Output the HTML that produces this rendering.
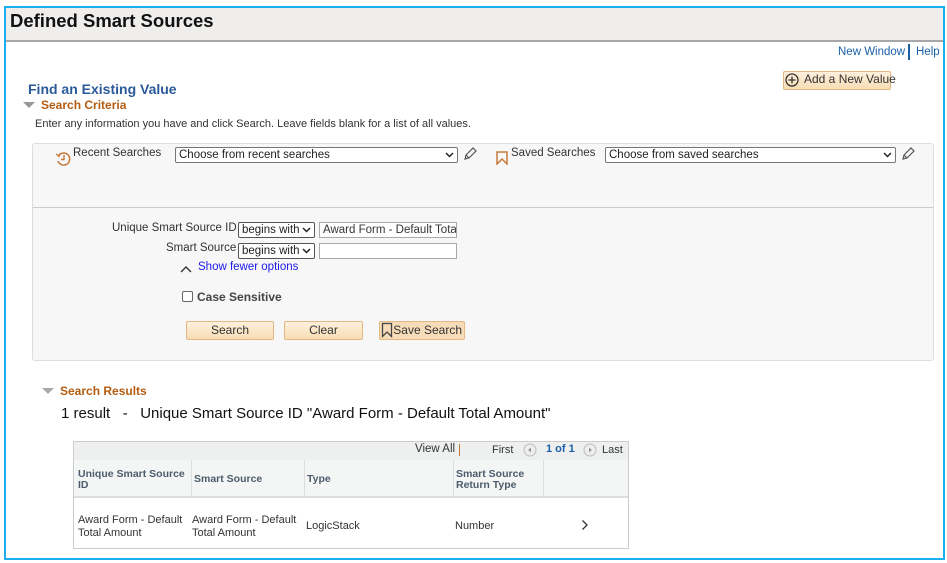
<!DOCTYPE html>
<html><head><meta charset="utf-8"><style>
*{margin:0;padding:0;box-sizing:border-box}
body{width:947px;height:563px;background:#fff;font-family:"Liberation Sans",Arial,sans-serif;position:relative;overflow:hidden;color:#333}
.a{position:absolute;white-space:nowrap}
.frame{position:absolute;left:4px;top:6px;width:941px;height:554px;border:2px solid #1ab0f0}
.hdr{position:absolute;left:6px;top:8px;width:937px;height:34px;background:#efeeed;border-bottom:2px solid #a8a8a8}
.sel{position:absolute;height:16px;border:1px solid #767676;background:#fff;font-size:11.5px;color:#222;padding:1px 3px;border-radius:2px;white-space:nowrap;overflow:hidden}
.sel svg{position:absolute;right:3px;top:4px}
.inp{position:absolute;height:16px;border:1px solid #a9a9a9;background:#fff;font-size:11.5px;color:#333;padding:1px 3px;overflow:hidden;white-space:nowrap}
.btn{position:absolute;height:19px;background:linear-gradient(#fdf0dc,#f8ddb5);border:1px solid #e3b883;font-size:12px;color:#333;text-align:center;line-height:17px;border-radius:2px;white-space:nowrap}
.th{position:absolute;font-size:10.5px;font-weight:bold;color:#4c5c6c;line-height:11px}
.td{position:absolute;font-size:11px;color:#333;line-height:13px}
</style></head><body>
<div class="hdr"></div>
<div class="frame"></div>
<div class="a" style="left:10px;top:10px;font-size:18.5px;font-weight:bold;color:#111">Defined Smart Sources</div>
<div class="a" style="left:838px;top:46px;font-size:11.5px;color:#1a5fa8">New Window</div>
<div class="a" style="left:908px;top:44px;width:2px;height:16px;background:#1a5fa8"></div>
<div class="a" style="left:916px;top:46px;font-size:11.5px;color:#1a5fa8">Help</div>
<div class="btn" style="left:783px;top:71px;width:108px;height:19px;text-align:left;padding-left:20px;line-height:15px">Add a New Value</div>
<svg class="a" style="left:785px;top:73px" width="14" height="14"><circle cx="7" cy="7" r="6" fill="none" stroke="#333" stroke-width="1.3"/><path d="M7 3.5v7M3.5 7h7" stroke="#333" stroke-width="1.3"/></svg>
<div class="a" style="left:28px;top:81px;font-size:14px;font-weight:bold;color:#2a5a9a">Find an Existing Value</div>
<svg class="a" style="left:23px;top:102px" width="12" height="8"><path d="M0 0h12L6 6z" fill="#999"/></svg>
<div class="a" style="left:41px;top:98px;font-size:12px;font-weight:bold;color:#b35c12">Search Criteria</div>
<div class="a" style="left:35px;top:118px;font-size:11px;color:#333">Enter any information you have and click Search. Leave fields blank for a list of all values.</div>
<div class="a" style="left:32px;top:143px;width:902px;height:218px;background:#f7f7f7;border:1px solid #ddd;border-radius:3px"></div>
<div class="a" style="left:33px;top:207px;width:900px;height:1px;background:#ccc"></div>
<svg class="a" style="left:55px;top:150px" width="18" height="18"><path d="M3.5 6A6 6 0 1 1 3 11" fill="none" stroke="#c67a3a" stroke-width="1.5"/><path d="M1 4l3 2.5 1.5-3.5" fill="none" stroke="#c67a3a" stroke-width="1.3"/><path d="M9 5v4.5h-3" fill="none" stroke="#c67a3a" stroke-width="1.4"/></svg>
<div class="a" style="left:73px;top:147px;font-size:11.5px;color:#333">Recent Searches</div>
<div class="sel" style="left:175px;top:147px;width:283px">Choose from recent searches<svg width="9" height="6"><path d="M1 1l3.5 3.5L8 1" fill="none" stroke="#222" stroke-width="1.5"/></svg></div>
<svg class="a" style="left:462px;top:146px" width="16" height="16"><path d="M3 13l1-4 7-7 3 3-7 7z M4 9l3 3" fill="none" stroke="#555" stroke-width="1.2"/></svg>
<svg class="a" style="left:496px;top:151px" width="12" height="14"><path d="M1 1h10v12L6 8 1 13z" fill="none" stroke="#c67a3a" stroke-width="1.5"/></svg>
<div class="a" style="left:511px;top:147px;font-size:11.5px;color:#333">Saved Searches</div>
<div class="sel" style="left:605px;top:147px;width:291px">Choose from saved searches<svg width="9" height="6"><path d="M1 1l3.5 3.5L8 1" fill="none" stroke="#222" stroke-width="1.5"/></svg></div>
<svg class="a" style="left:900px;top:146px" width="16" height="16"><path d="M3 13l1-4 7-7 3 3-7 7z M4 9l3 3" fill="none" stroke="#555" stroke-width="1.2"/></svg>
<div class="a" style="left:112px;top:222px;font-size:11.5px;color:#333">Unique Smart Source ID</div>
<div class="sel" style="left:238px;top:222px;width:77px;border-color:#555">begins with<svg width="9" height="6"><path d="M1 1l3.5 3.5L8 1" fill="none" stroke="#222" stroke-width="1.5"/></svg></div>
<div class="inp" style="left:319px;top:222px;width:138px">Award Form - Default Tota</div>
<div class="a" style="left:166px;top:242px;font-size:11.5px;color:#333">Smart Source</div>
<div class="sel" style="left:238px;top:243px;width:77px;border-color:#555">begins with<svg width="9" height="6"><path d="M1 1l3.5 3.5L8 1" fill="none" stroke="#222" stroke-width="1.5"/></svg></div>
<div class="inp" style="left:319px;top:243px;width:138px"></div>
<svg class="a" style="left:180px;top:265px" width="12" height="8"><path d="M1 7l5-5 5 5" fill="none" stroke="#333" stroke-width="1.4"/></svg>
<div class="a" style="left:198px;top:261px;font-size:11.5px;color:#1a1aee">Show fewer options</div>
<div class="a" style="left:182px;top:291px;width:11px;height:11px;border:1px solid #666;border-radius:2px;background:#fff"></div>
<div class="a" style="left:197px;top:290px;font-size:12px;font-weight:bold;color:#444">Case Sensitive</div>
<div class="btn" style="left:186px;top:321px;width:88px">Search</div>
<div class="btn" style="left:284px;top:321px;width:79px">Clear</div>
<div class="btn" style="left:379px;top:321px;width:86px;background:#f6dcb8;text-align:right;padding-right:2px">Save Search</div>
<svg class="a" style="left:381px;top:322px" width="12" height="16"><path d="M1.5 1.5h9v13L6 10l-4.5 4.5z" fill="none" stroke="#444" stroke-width="1.3"/></svg>
<svg class="a" style="left:42px;top:388px" width="12" height="8"><path d="M0 0h12L6 6z" fill="#aaa"/></svg>
<div class="a" style="left:60px;top:384px;font-size:12px;font-weight:bold;color:#b35c12">Search Results</div>
<div class="a" style="left:61px;top:405px;font-size:15px;color:#111">1 result&nbsp;&nbsp;&nbsp;-&nbsp;&nbsp;&nbsp;Unique Smart Source ID "Award Form - Default Total Amount"</div>
<div class="a" style="left:73px;top:441px;width:556px;height:108px;border:1px solid #ccc;background:#fff"></div>
<div class="a" style="left:74px;top:442px;width:554px;height:18px;background:#eef0f0"></div>
<div class="a" style="left:415px;top:443px;font-size:11.5px;color:#333">View All</div>
<div class="a" style="left:459px;top:444px;width:1px;height:12px;background:#c67a3a"></div>
<div class="a" style="left:492px;top:444px;font-size:11px;color:#333">First</div>
<svg class="a" style="left:523px;top:443px" width="14" height="14"><circle cx="7" cy="7" r="6" fill="#eee" stroke="#bbb"/><path d="M8 4.5v5L5 7z" fill="#999"/></svg>
<div class="a" style="left:546px;top:443px;font-size:11px;font-weight:bold;color:#1a5fa8">1 of 1</div>
<svg class="a" style="left:583px;top:443px" width="14" height="14"><circle cx="7" cy="7" r="6" fill="#eee" stroke="#bbb"/><path d="M6 4.5v5L9 7z" fill="#999"/></svg>
<div class="a" style="left:602px;top:444px;font-size:11px;color:#333">Last</div>
<div class="a" style="left:74px;top:460px;width:554px;height:38px;background:#f4f5f5;border-bottom:2px solid #ddd"></div>
<div class="a" style="left:191px;top:460px;width:1px;height:36px;background:#ddd"></div>
<div class="a" style="left:304px;top:460px;width:1px;height:36px;background:#ddd"></div>
<div class="a" style="left:453px;top:460px;width:1px;height:36px;background:#ddd"></div>
<div class="a" style="left:543px;top:460px;width:1px;height:36px;background:#ddd"></div>
<div class="th" style="left:78px;top:469px">Unique Smart Source<br>ID</div>
<div class="th" style="left:194px;top:474px">Smart Source</div>
<div class="th" style="left:307px;top:474px">Type</div>
<div class="th" style="left:456px;top:469px">Smart Source<br>Return Type</div>
<div class="td" style="left:78px;top:514px">Award Form - Default<br>Total Amount</div>
<div class="td" style="left:192px;top:514px">Award Form - Default<br>Total Amount</div>
<div class="td" style="left:306px;top:520px">LogicStack</div>
<div class="td" style="left:455px;top:520px">Number</div>
<svg class="a" style="left:581px;top:519px" width="8" height="12"><path d="M1.5 1.5l4.5 4.5-4.5 4.5" fill="none" stroke="#333" stroke-width="1.3"/></svg>
</body></html>
